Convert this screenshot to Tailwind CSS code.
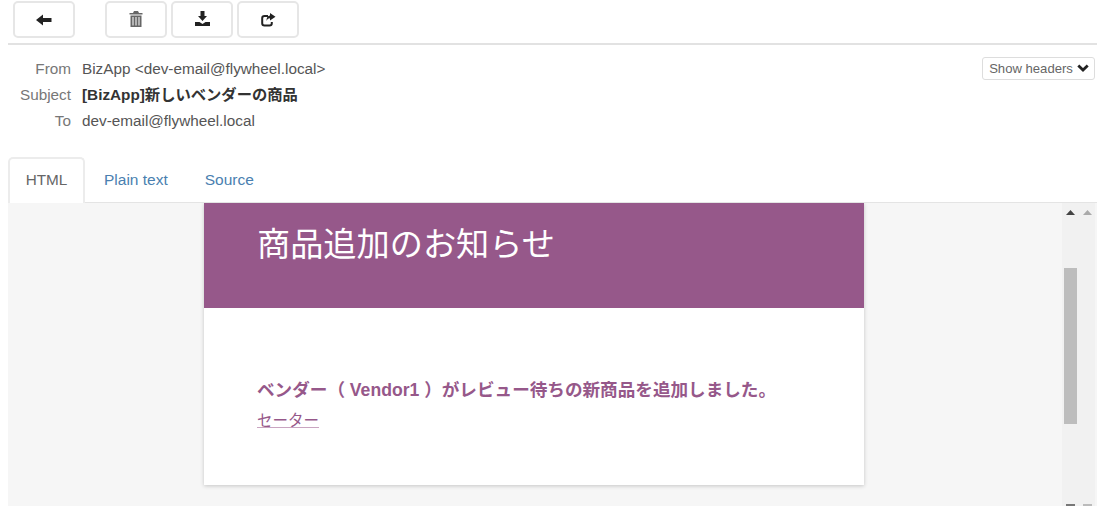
<!DOCTYPE html>
<html lang="ja">
<head>
  <meta charset="UTF-8" />
  <title>Message</title>
  <script src="https://cdn.jsdelivr.net/npm/@tailwindcss/browser@4"></script>
</head>
<body class="bg-white h-[506px] w-[1105px] overflow-hidden font-['Liberation_Sans','Noto_Sans_CJK_JP',sans-serif] text-[15.3px] text-[#333]">
  <div class="ml-[8px] w-[1089px] h-[506px] flex flex-col">
    <!-- Toolbar -->
    <div class="h-[45px] border-b-2 border-[#e2e2e2] pl-[5px] pt-px flex items-start shrink-0">
      <button class="w-[62px] h-[37px] border-2 border-[#e6e6e6] rounded-[5px] flex items-center justify-center">
        <svg width="16" height="14" viewBox="0 0 16 14" fill="#222"><path d="M0 7 7 1.500V5h8.500v4H7v3.500z"/></svg>
      </button>
      <div class="ml-[30px] flex gap-[4px]">
        <button class="w-[62px] h-[37px] border-2 border-[#e6e6e6] rounded-[5px] flex items-center justify-center pb-[2px]">
          <svg width="14" height="16" viewBox="0 0 14 16" fill="#666"><path d="M5 0h4l1 2h3.500v1.500H.5V2H4zM1.500 4.500h11V16h-11zM3.500 6v8.500h1V6zM6.500 6v8.500h1V6zM9.500 6v8.500h1V6z" fill-rule="evenodd"/></svg>
        </button>
        <button class="w-[62px] h-[37px] border-2 border-[#e6e6e6] rounded-[5px] flex items-center justify-center pb-[2px]">
          <svg width="15" height="15" viewBox="0 0 15 15" fill="#222"><path d="M5.500 0h4v5H12L7.500 10 3 5h2.500zM0 11h4.500l3 2 3-2H15v4H0z"/></svg>
        </button>
        <button class="w-[62px] h-[37px] border-2 border-[#e6e6e6] rounded-[5px] flex items-center justify-center">
          <svg width="15" height="14" viewBox="0 0 15 14" fill="none"><path d="M7 3H3.500A2.300 2.300 0 0 0 1.200 5.300v5A2.300 2.300 0 0 0 3.500 12.600h5a2.300 2.300 0 0 0 2.300-2.300V9" stroke="#222" stroke-width="2"/><path d="M9 0 14.500 3.700 9 7.500V5.300C7.500 5.300 6.300 6 5.500 8c0-3.500 1.200-5.200 3.500-5.500z" fill="#222"/></svg>
        </button>
      </div>
    </div>

    <!-- Headers -->
    <div class="relative h-[112px] shrink-0 pt-[11px] text-[#555]">
      <div class="flex h-[26px] items-center"><span class="w-[63px] text-right text-[#777]">From</span><span class="ml-[11px]">BizApp &lt;dev-email@flywheel.local&gt;</span></div>
      <div class="flex h-[26px] items-center"><span class="w-[63px] text-right text-[#777]">Subject</span><span class="ml-[11px] font-bold text-[#333]">[BizApp]新しいベンダーの商品</span></div>
      <div class="flex h-[26px] items-center"><span class="w-[63px] text-right text-[#777]">To</span><span class="ml-[11px]">dev-email@flywheel.local</span></div>
      <button class="absolute right-[2px] top-[12px] w-[113px] h-[23px] border border-[#ddd] rounded-[3px] text-[13.100px] text-[#666] flex items-center justify-center gap-[4px] pl-[1px]">
        Show headers
        <svg class="mb-[2px]" width="12" height="8" viewBox="0 0 12 8" fill="none"><path d="M1.300 1.500 6 6 10.700 1.500" stroke="#222" stroke-width="2.800"/></svg>
      </button>
    </div>

    <!-- Tabs -->
    <div class="h-[46px] shrink-0 flex border-b border-[#e4e4e4]">
      <div class="w-[77px] h-[46px] pb-[2px] border-2 border-b-0 border-[#ececec] rounded-t-[5px] bg-white flex items-center justify-center text-[#666]">HTML</div>
      <div class="ml-[19px] flex items-center pt-[1px] text-[15.500px] text-[#4a7fb0]">Plain text</div>
      <div class="ml-[37px] flex items-center pt-[1px] text-[15.500px] text-[#4a7fb0]">Source</div>
    </div>

    <!-- Preview -->
    <div class="flex-1 min-h-0 bg-[#f6f6f6] flex overflow-hidden">
      <div class="w-[1054px] shrink-0 pl-[196px]">
        <div class="w-[660px] h-[282px] bg-white shadow-[0_1px_4px_rgba(0,0,0,0.2)]">
          <div class="h-[105px] bg-[#96588a] pl-[53px] pt-[20px] text-[33.200px] leading-[44px] text-white">商品追加のお知らせ</div>
          <div class="pl-[53px] pt-[69px]">
            <div class="text-[17.600px] leading-[26px] font-bold text-[#96588a]">ベンダー（ Vendor1 ）がレビュー待ちの新商品を追加しました。</div>
            <a class="block mt-[7px] text-[15.500px] leading-[22px] text-[#96588a] underline decoration-[#c9a5c1]">セーター</a>
          </div>
        </div>
      </div>
      <!-- Scrollbars -->
      <div class="relative w-[33px] h-full bg-[#f1f1f1]">
        <svg class="absolute left-[4px] top-[7px]" width="9" height="5" viewBox="0 0 9 5" fill="#444"><path d="M4.500 0 9 5H0z"/></svg>
        <svg class="absolute left-[21px] top-[7px]" width="9" height="5" viewBox="0 0 9 5" fill="#aaa"><path d="M4.500 0 9 5H0z"/></svg>
        <div class="absolute left-[2px] top-[65px] w-[13px] h-[156px] bg-[#bdbdbd]"></div>
        <div class="absolute left-[4px] bottom-0 w-[9px] h-[2px] bg-[#777]"></div>
        <div class="absolute left-[21px] bottom-0 w-[9px] h-[2px] bg-[#bbb]"></div>
      </div>
    </div>
  </div>
</body>
</html>
